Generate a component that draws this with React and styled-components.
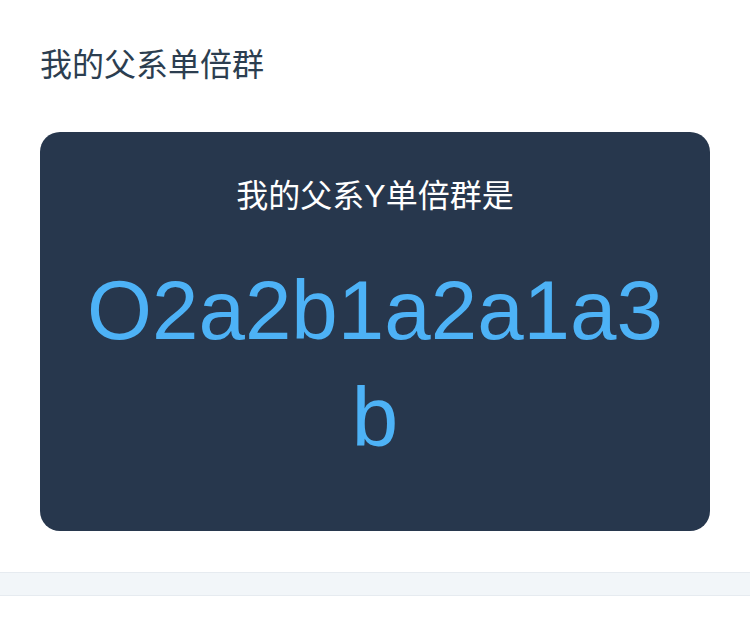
import React from 'react';
import styled, { createGlobalStyle } from 'styled-components';

const GlobalStyle = createGlobalStyle`
  html, body {
    margin: 0;
    padding: 0;
    background: #ffffff;
  }
  body {
    font-family: "Liberation Sans", "Noto Sans CJK SC", sans-serif;
  }
`;

const Page = styled.div`
  display: flex;
  flex-direction: column;
  padding-top: 43px;
`;

const Section = styled.section`
  display: flex;
  flex-direction: column;
  padding: 0 40px 41px;
`;

const Title = styled.h2`
  margin: 0 0 45px;
  font-size: 32px;
  font-weight: 400;
  line-height: 44px;
  color: #2c3e50;
`;

const Card = styled.div`
  display: flex;
  flex-direction: column;
  align-items: center;
  background: #27374d;
  border-radius: 20px;
  padding: 42px 40px 60px;
  text-align: center;
`;

const Label = styled.div`
  font-size: 32px;
  line-height: 44px;
  color: #ffffff;
  margin-bottom: 39px;
`;

const Haplogroup = styled.div`
  width: 100%;
  font-size: 83.5px;
  line-height: 107px;
  color: #4db2f6;
  word-break: break-all;
`;

const Divider = styled.div`
  height: 22px;
  background: #f2f6f9;
  border-top: 1px solid #e6ebf0;
  border-bottom: 1px solid #e6ebf0;
`;

export default function App() {
  return (
    <>
      <GlobalStyle />
      <Page>
        <Section>
          <Title>我的父系单倍群</Title>
          <Card>
            <Label>我的父系Y单倍群是</Label>
            <Haplogroup>O2a2b1a2a1a3b</Haplogroup>
          </Card>
        </Section>
        <Divider />
      </Page>
    </>
  );
}
